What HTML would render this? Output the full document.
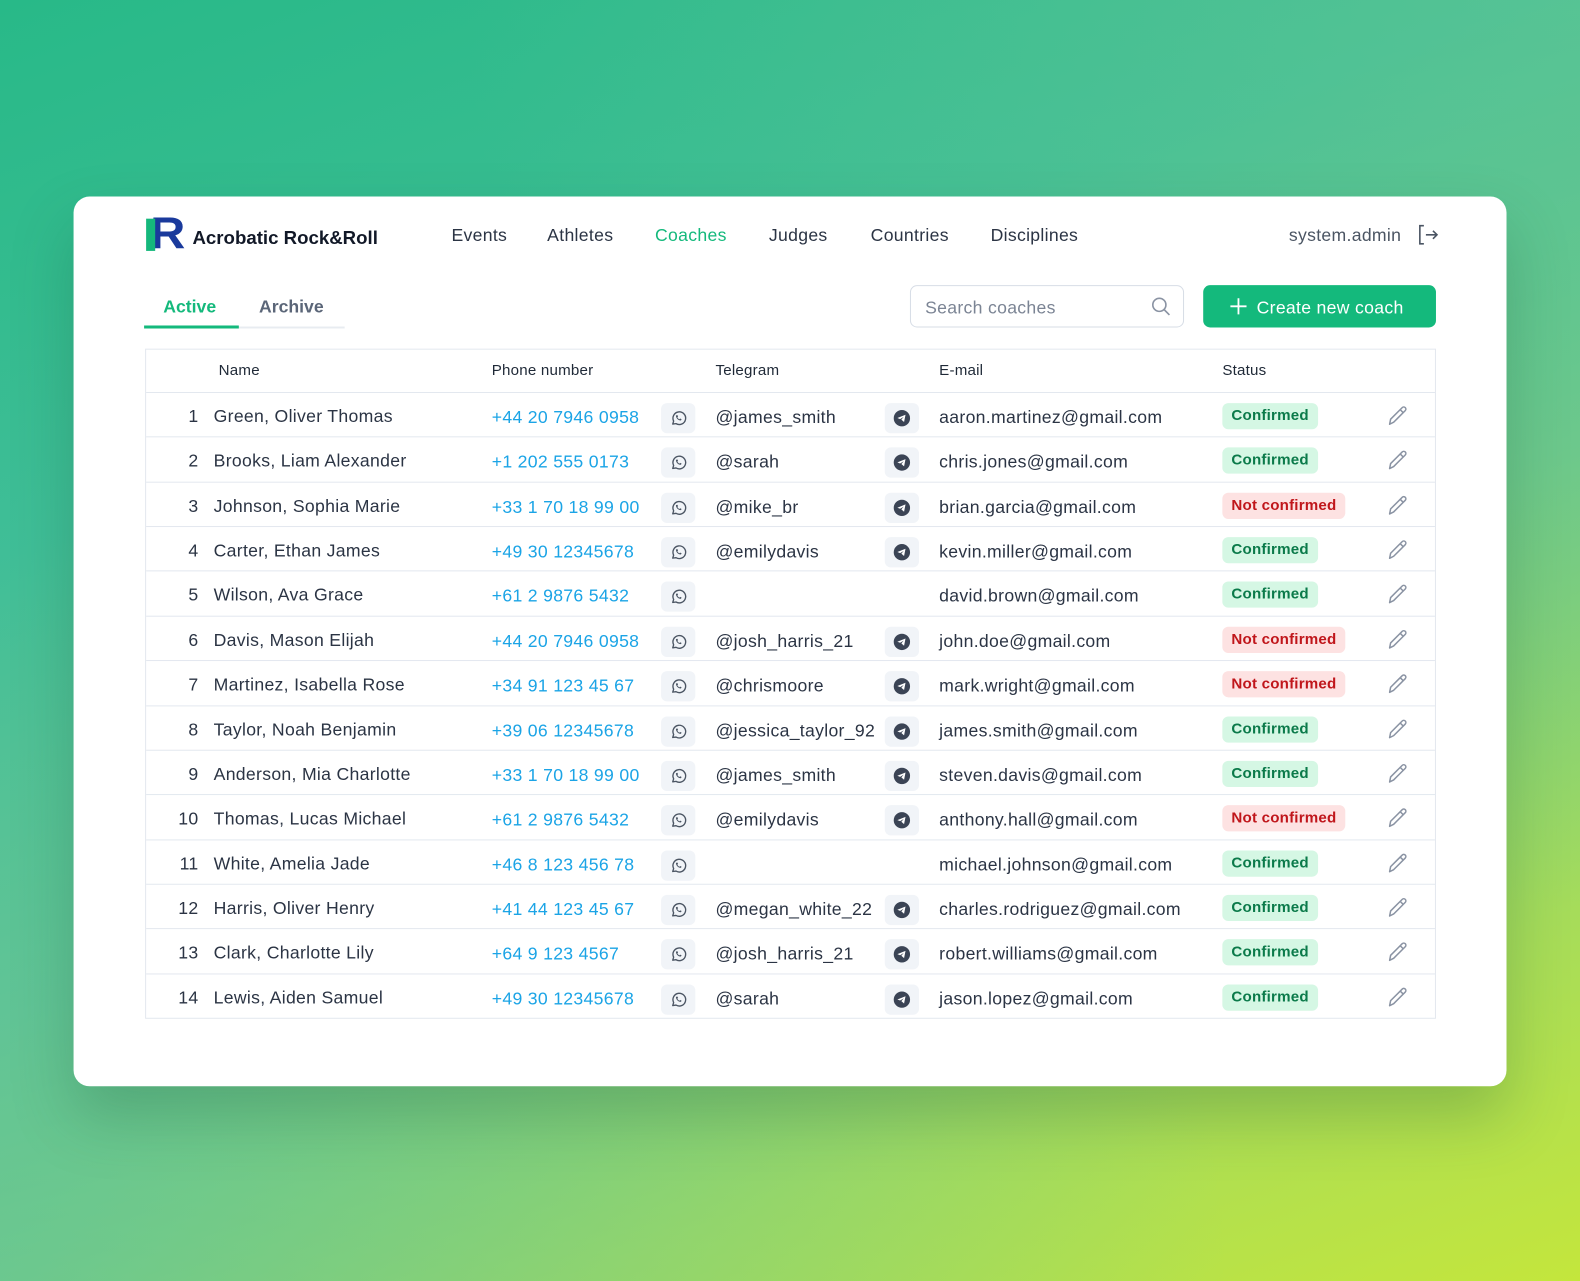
<!DOCTYPE html>
<html><head><meta charset="utf-8"><style>
*{margin:0;padding:0;box-sizing:border-box}
html,body{width:1580px;height:1281px;overflow:hidden}
body{font-family:"Liberation Sans",Arial,sans-serif;position:relative;
background:linear-gradient(160deg,#28b988 0%,#3dbe94 30%,#6cc888 55%,#a6dc5a 80%,#c4e63c 100%);}
.bgo{position:absolute;inset:0;background:radial-gradient(ellipse at 0% 100%,rgba(80,190,170,.55),rgba(80,190,170,0) 55%),radial-gradient(ellipse at 100% 0%,rgba(110,200,150,.5),rgba(110,200,150,0) 50%)}
.w{position:absolute;left:0;top:0;width:1568px;height:1271px;transform:scale(1.0077);transform-origin:0 0}
.card{position:absolute;left:73px;top:195px;width:1422px;height:883px;background:#fff;border-radius:16px;box-shadow:0 30px 60px rgba(20,80,50,.25)}
.a{position:absolute;white-space:nowrap}
.nav{top:223px;font-size:17.5px;color:#2b3444;letter-spacing:.3px}
.tbl{position:absolute;left:144px;top:346px;width:1281px;height:665px;border:1px solid #e3e8ef}
.th{position:absolute;top:359px;font-size:15px;color:#1f2937;letter-spacing:.2px}
.row{position:absolute;left:145px;width:1279px;height:44.36px;border-top:1px solid #e3e8ef;letter-spacing:.3px}
.row>*{position:absolute;white-space:nowrap}
.n{right:1227px;top:13px;font-size:17.5px;color:#2b3444}
.nm{left:67px;top:13px;font-size:17.5px;color:#2b3444}
.ph{left:343px;top:14px;font-size:17.5px;color:#1ba4e6}
.ib{width:34px;height:30px;background:#f1f4f8;border-radius:6px;top:10px;display:flex;align-items:center;justify-content:center}
.wa{left:511px}.tg{left:733px}
.tgt{left:565px;top:14px;font-size:17.5px;color:#2b3444}
.em{left:787px;top:14px;font-size:17.5px;color:#2b3444}
.st{left:1068px;top:10px;height:26px;line-height:26px;padding:0 9px;border-radius:6px;font-size:15px;font-weight:bold;letter-spacing:.2px}
.c{background:#d5f7e4;color:#0b7a4a}.x{background:#fde2e2;color:#c0161b}
.pen{left:1230px;top:10px}
</style></head><body><div class="bgo"></div>
<div class="w">
<div class="card"></div>
<div class="a" style="left:149px;top:208px;font-size:44px;font-weight:bold;color:#1a3a9c;line-height:48px;transform:scaleX(1.1);transform-origin:0 0">R</div>
<div class="a" style="left:145px;top:217px;width:9px;height:32px;background:#15b87c"></div>
<div class="a" style="left:191px;top:225px;font-size:18.5px;font-weight:bold;color:#111827">Acrobatic Rock&amp;Roll</div>
<div class="a nav" style="left:448px">Events</div>
<div class="a nav" style="left:543px">Athletes</div>
<div class="a nav" style="left:650px;color:#14b97c">Coaches</div>
<div class="a nav" style="left:763px">Judges</div>
<div class="a nav" style="left:864px">Countries</div>
<div class="a nav" style="left:983px">Disciplines</div>
<div class="a nav" style="left:1279px;color:#4b5563">system.admin</div>
<svg class="a" style="left:1406px;top:222px" width="22" height="22" viewBox="0 0 22 22" fill="none" stroke="#4b5563" stroke-width="1.6"><path d="M7 2H3v18h4M9 11h11M16 7l4 4-4 4"/></svg>
<div class="a" style="left:162px;top:294px;font-size:17.5px;font-weight:bold;color:#14b97c">Active</div>
<div class="a" style="left:257px;top:294px;font-size:17.5px;font-weight:bold;color:#5b6678">Archive</div>
<div class="a" style="left:143px;top:324px;width:199px;height:2px;background:#e8ecf1"></div>
<div class="a" style="left:143px;top:323px;width:94px;height:3px;background:#14b97c"></div>
<div class="a" style="left:903px;top:283px;width:272px;height:42px;border:1.5px solid #d7dde6;border-radius:7px"></div>
<div class="a" style="left:918px;top:295px;font-size:17.5px;color:#7b8494;letter-spacing:.3px">Search coaches</div>
<svg class="a" style="left:1141px;top:293px" width="22" height="22" viewBox="0 0 22 22" fill="none" stroke="#8a93a3" stroke-width="1.6"><circle cx="9.5" cy="9.5" r="6.5"/><path d="M14.5 14.5l5 5"/></svg>
<div class="a" style="left:1194px;top:283px;width:231px;height:42px;background:#14b97c;border-radius:7px"></div>
<svg class="a" style="left:1219px;top:294px" width="20" height="20" viewBox="0 0 20 20" stroke="#fff" stroke-width="1.8"><path d="M10 2v16M2 10h16"/></svg>
<div class="a" style="left:1247px;top:295px;font-size:17.5px;color:#fff;letter-spacing:.3px">Create new coach</div>
<div class="tbl"></div>
<div class="a th" style="left:217px">Name</div>
<div class="a th" style="left:488px">Phone number</div>
<div class="a th" style="left:710px">Telegram</div>
<div class="a th" style="left:932px">E-mail</div>
<div class="a th" style="left:1213px">Status</div>

<svg width="0" height="0" style="position:absolute"><defs>
<symbol id="w" viewBox="0 0 20 20"><path d="M4 16.5l1-3.3A7 7 0 1 1 7.6 16z" fill="none" stroke="#4b5563" stroke-width="1.5" stroke-linejoin="round"/><path d="M7.5 7c0 3 2.5 5.5 5.5 5.5l.8-1.3-1.6-.8-.8.8c-1-.4-1.9-1.3-2.3-2.3l.8-.8-.8-1.6z" fill="#4b5563"/></symbol>
<symbol id="t" viewBox="0 0 20 20"><circle cx="10" cy="10" r="9" fill="#3b4455"/><path d="M5 9.8l9-3.6-1.6 8-3-2.6 2.6-3-4 2.4z" fill="#fff"/></symbol>
<symbol id="p" viewBox="0 0 24 24"><path d="M4 21l1-5L16.5 4.5a2.1 2.1 0 0 1 3 3L8 19z M14.5 6.5l3 3" fill="none" stroke="#8a93a3" stroke-width="1.5" stroke-linejoin="round"/></symbol>
</defs></svg>

<div class="row" style="top:389px"><span class="n">1</span><span class="nm">Green, Oliver Thomas</span><span class="ph">+44 20 7946 0958</span><span class="ib wa"><svg width="18" height="18"><use href="#w"/></svg></span><span class="tgt">@james_smith</span><span class="ib tg"><svg width="18" height="18"><use href="#t"/></svg></span><span class="em">aaron.martinez@gmail.com</span><span class="st c">Confirmed</span><svg class="pen" width="24" height="24"><use href="#p"/></svg></div>
<div class="row" style="top:433.4px"><span class="n">2</span><span class="nm">Brooks, Liam Alexander</span><span class="ph">+1 202 555 0173</span><span class="ib wa"><svg width="18" height="18"><use href="#w"/></svg></span><span class="tgt">@sarah</span><span class="ib tg"><svg width="18" height="18"><use href="#t"/></svg></span><span class="em">chris.jones@gmail.com</span><span class="st c">Confirmed</span><svg class="pen" width="24" height="24"><use href="#p"/></svg></div>
<div class="row" style="top:477.7px"><span class="n">3</span><span class="nm">Johnson, Sophia Marie</span><span class="ph">+33 1 70 18 99 00</span><span class="ib wa"><svg width="18" height="18"><use href="#w"/></svg></span><span class="tgt">@mike_br</span><span class="ib tg"><svg width="18" height="18"><use href="#t"/></svg></span><span class="em">brian.garcia@gmail.com</span><span class="st x">Not confirmed</span><svg class="pen" width="24" height="24"><use href="#p"/></svg></div>
<div class="row" style="top:522.1px"><span class="n">4</span><span class="nm">Carter, Ethan James</span><span class="ph">+49 30 12345678</span><span class="ib wa"><svg width="18" height="18"><use href="#w"/></svg></span><span class="tgt">@emilydavis</span><span class="ib tg"><svg width="18" height="18"><use href="#t"/></svg></span><span class="em">kevin.miller@gmail.com</span><span class="st c">Confirmed</span><svg class="pen" width="24" height="24"><use href="#p"/></svg></div>
<div class="row" style="top:566.4px"><span class="n">5</span><span class="nm">Wilson, Ava Grace</span><span class="ph">+61 2 9876 5432</span><span class="ib wa"><svg width="18" height="18"><use href="#w"/></svg></span><span class="em">david.brown@gmail.com</span><span class="st c">Confirmed</span><svg class="pen" width="24" height="24"><use href="#p"/></svg></div>
<div class="row" style="top:610.8px"><span class="n">6</span><span class="nm">Davis, Mason Elijah</span><span class="ph">+44 20 7946 0958</span><span class="ib wa"><svg width="18" height="18"><use href="#w"/></svg></span><span class="tgt">@josh_harris_21</span><span class="ib tg"><svg width="18" height="18"><use href="#t"/></svg></span><span class="em">john.doe@gmail.com</span><span class="st x">Not confirmed</span><svg class="pen" width="24" height="24"><use href="#p"/></svg></div>
<div class="row" style="top:655.2px"><span class="n">7</span><span class="nm">Martinez, Isabella Rose</span><span class="ph">+34 91 123 45 67</span><span class="ib wa"><svg width="18" height="18"><use href="#w"/></svg></span><span class="tgt">@chrismoore</span><span class="ib tg"><svg width="18" height="18"><use href="#t"/></svg></span><span class="em">mark.wright@gmail.com</span><span class="st x">Not confirmed</span><svg class="pen" width="24" height="24"><use href="#p"/></svg></div>
<div class="row" style="top:699.5px"><span class="n">8</span><span class="nm">Taylor, Noah Benjamin</span><span class="ph">+39 06 12345678</span><span class="ib wa"><svg width="18" height="18"><use href="#w"/></svg></span><span class="tgt">@jessica_taylor_92</span><span class="ib tg"><svg width="18" height="18"><use href="#t"/></svg></span><span class="em">james.smith@gmail.com</span><span class="st c">Confirmed</span><svg class="pen" width="24" height="24"><use href="#p"/></svg></div>
<div class="row" style="top:743.9px"><span class="n">9</span><span class="nm">Anderson, Mia Charlotte</span><span class="ph">+33 1 70 18 99 00</span><span class="ib wa"><svg width="18" height="18"><use href="#w"/></svg></span><span class="tgt">@james_smith</span><span class="ib tg"><svg width="18" height="18"><use href="#t"/></svg></span><span class="em">steven.davis@gmail.com</span><span class="st c">Confirmed</span><svg class="pen" width="24" height="24"><use href="#p"/></svg></div>
<div class="row" style="top:788.2px"><span class="n">10</span><span class="nm">Thomas, Lucas Michael</span><span class="ph">+61 2 9876 5432</span><span class="ib wa"><svg width="18" height="18"><use href="#w"/></svg></span><span class="tgt">@emilydavis</span><span class="ib tg"><svg width="18" height="18"><use href="#t"/></svg></span><span class="em">anthony.hall@gmail.com</span><span class="st x">Not confirmed</span><svg class="pen" width="24" height="24"><use href="#p"/></svg></div>
<div class="row" style="top:832.6px"><span class="n">11</span><span class="nm">White, Amelia Jade</span><span class="ph">+46 8 123 456 78</span><span class="ib wa"><svg width="18" height="18"><use href="#w"/></svg></span><span class="em">michael.johnson@gmail.com</span><span class="st c">Confirmed</span><svg class="pen" width="24" height="24"><use href="#p"/></svg></div>
<div class="row" style="top:877px"><span class="n">12</span><span class="nm">Harris, Oliver Henry</span><span class="ph">+41 44 123 45 67</span><span class="ib wa"><svg width="18" height="18"><use href="#w"/></svg></span><span class="tgt">@megan_white_22</span><span class="ib tg"><svg width="18" height="18"><use href="#t"/></svg></span><span class="em">charles.rodriguez@gmail.com</span><span class="st c">Confirmed</span><svg class="pen" width="24" height="24"><use href="#p"/></svg></div>
<div class="row" style="top:921.3px"><span class="n">13</span><span class="nm">Clark, Charlotte Lily</span><span class="ph">+64 9 123 4567</span><span class="ib wa"><svg width="18" height="18"><use href="#w"/></svg></span><span class="tgt">@josh_harris_21</span><span class="ib tg"><svg width="18" height="18"><use href="#t"/></svg></span><span class="em">robert.williams@gmail.com</span><span class="st c">Confirmed</span><svg class="pen" width="24" height="24"><use href="#p"/></svg></div>
<div class="row" style="top:965.7px"><span class="n">14</span><span class="nm">Lewis, Aiden Samuel</span><span class="ph">+49 30 12345678</span><span class="ib wa"><svg width="18" height="18"><use href="#w"/></svg></span><span class="tgt">@sarah</span><span class="ib tg"><svg width="18" height="18"><use href="#t"/></svg></span><span class="em">jason.lopez@gmail.com</span><span class="st c">Confirmed</span><svg class="pen" width="24" height="24"><use href="#p"/></svg></div>
</div>
</body></html>
